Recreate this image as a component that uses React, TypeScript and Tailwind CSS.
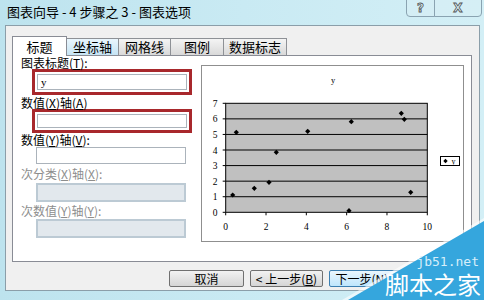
import React from 'react'

const cjk = "font-['Noto_Sans_CJK_SC','Noto_Sans',sans-serif]"

const points: [number, number][] = [
    [31.7, 130], [35.3, 67.3], [53.3, 123.3], [68, 117.3], [75.3, 87.3], [106.7, 66.3],
    [148, 145.7], [150.3, 56.7], [200.3, 48.3], [203.3, 54.3], [209.7, 127.3],
]

const Diamond = ({ x, y, r = 2.6 }: { x: number; y: number; r?: number }) => (
    <polygon points={`${x},${y - r} ${x + r},${y} ${x},${y + r} ${x - r},${y}`} fill="#000" />
)

const ChartPreview = () => {
    const left = 24.7
    const right = 226.3
    const top = 38.3
    const bottom = 147.3
    const step = (bottom - top) / 7
    return (
        <svg viewBox="0 0 261 175" className="block h-full w-full">
            <g transform="translate(-1,-1)" fontFamily="'Liberation Serif', serif" fontSize="9.5" fill="#000">
                <text x="132" y="17.5" textAnchor="middle" fontSize="8.5">y</text>
                <rect x={left} y={top} width={right - left} height={bottom - top} fill="#c0c0c0" stroke="#000" strokeWidth="1" />
                {[1, 2, 3, 4, 5, 6].map((v) => (
                    <line key={v} x1={left} x2={right} y1={bottom - v * step} y2={bottom - v * step} stroke="#000" strokeWidth="1" />
                ))}
                {[0, 1, 2, 3, 4, 5, 6, 7].map((v) => (
                    <g key={v}>
                        <line x1={left - 3} x2={left} y1={bottom - v * step} y2={bottom - v * step} stroke="#000" />
                        <text x="14" y={bottom - v * step + 3.5} textAnchor="middle">{v}</text>
                    </g>
                ))}
                {[0, 2, 4, 6, 8, 10].map((v) => {
                    const x = left + (v / 10) * (right - left)
                    return (
                        <g key={v}>
                            <line x1={x} x2={x} y1={bottom} y2={bottom + 3} stroke="#000" />
                            <text x={x} y="165" textAnchor="middle">{v}</text>
                        </g>
                    )
                })}
                {points.map(([x, y], i) => (
                    <Diamond key={i} x={x} y={y} />
                ))}
                <rect x="239.5" y="91.5" width="19" height="9" fill="#fff" stroke="#000" strokeWidth="1" />
                <Diamond x={244.5} y={96} r={2.2} />
                <text x="252.5" y="99" fontSize="8" textAnchor="middle">y</text>
            </g>
        </svg>
    )
}

const Label = ({ children, disabled, className }: { children: React.ReactNode; disabled?: boolean; className?: string }) => (
    <div className={`text-[12px] leading-[12px] whitespace-nowrap ${disabled ? 'text-[#8d8d8d]' : 'text-black'} ${className ?? ''}`}>
        {children}
    </div>
)

const tabs = [
    { name: '坐标轴', w: 'w-[53px]', hover: true },
    { name: '网格线', w: 'w-[53px]' },
    { name: '图例', w: 'w-[54px]' },
    { name: '数据标志', w: 'w-[64px]' },
]

const App = () => {
    return (
        <div className={`relative h-[300px] w-[484px] overflow-hidden bg-gradient-to-r from-[#bde3ee] via-[#c9eaf3] to-[#d3eff6] ${cjk}`}>
            {/* title bar */}
            <div className="flex h-[25px] items-start">
                <div className="pl-[7px] pt-[3px] text-[13px] leading-[18px] text-black">图表向导 - 4 步骤之 3 - 图表选项</div>
                <div className="ml-auto mr-[2px] -mt-px flex h-[18px]">
                    <div className="flex w-[29px] items-center justify-center rounded-bl-[4px] border border-[#8aa3b1] bg-[#d7eef5]/60 font-['DejaVu_Sans',sans-serif] text-[12px] font-bold text-transparent [-webkit-text-stroke:0.8px_#555]">
                        ?
                    </div>
                    <div className="-ml-px flex w-[48px] items-center justify-center rounded-br-[4px] border border-[#8aa3b1] bg-[#d7eef5]/60 font-['DejaVu_Sans',sans-serif] text-[12px] font-bold text-transparent [-webkit-text-stroke:0.8px_#555]">
                        X
                    </div>
                </div>
            </div>

            {/* dialog body */}
            <div className="ml-[5px] h-[266px] w-[475px] border border-[#8b9ea9] bg-[#f0f0f0] pl-[6px] pt-[10px]">
                {/* tabs */}
                <div className="flex h-[19px] items-end">
                    <div className="relative z-10 -mb-px flex h-[20px] w-[55px] items-center justify-center border border-b-0 border-[#898c95] bg-white text-[13px] text-black">
                        标题
                    </div>
                    {tabs.map((t) => (
                        <div
                            key={t.name}
                            className={`-ml-px flex h-[17px] ${t.w} items-center justify-center border border-b-0 border-[#8e9196] text-[13px] text-black ${t.hover ? 'bg-gradient-to-b from-[#eaf6fd] to-[#c6e4f4]' : 'bg-gradient-to-b from-[#f4f4f4] to-[#d9d9d9]'}`}
                        >
                            {t.name}
                        </div>
                    ))}
                </div>

                {/* panel */}
                <div className="flex h-[207px] w-[460px] border border-[#898c95] bg-white">
                    <div className="w-[180px] pl-[8px] pt-[1px]">
                        <Label>
                            图表标题(<span className="underline">T</span>):
                        </Label>
                        <div className="ml-[11px] h-[26px] w-[160px] border-[3px] border-[#a8282c] p-[2px]">
                            <div className="flex h-full items-center border border-[#abb3bb] bg-white pl-[3px] font-['Liberation_Serif',serif] text-[11px] leading-none">
                                y
                            </div>
                        </div>
                        <Label className="mt-[2px]">
                            数值(<span className="underline">X</span>)轴(<span className="underline">A</span>)
                        </Label>
                        <div className="ml-[11px] h-[24px] w-[160px] border-[3px] border-[#a8282c] p-[2px]">
                            <div className="h-full border border-[#abb3bb] bg-white" />
                        </div>
                        <Label className="mt-[1px]">
                            数值(<span className="underline">Y</span>)轴(<span className="underline">V</span>):
                        </Label>
                        <div className="ml-[15px] mt-[1px] h-[17px] w-[150px] border border-[#abb3bb] bg-white" />
                        <Label disabled className="mt-[4px]">
                            次分类(<span className="underline">X</span>)轴(<span className="underline">X</span>):
                        </Label>
                        <div className="ml-[15px] mt-[3px] h-[19px] w-[150px] border-2 border-[#bccad4] bg-[#e2e8ed]" />
                        <Label disabled className="mt-[3px]">
                            次数值(<span className="underline">Y</span>)轴(<span className="underline">Y</span>):
                        </Label>
                        <div className="ml-[15px] mt-[2px] h-[19px] w-[150px] border-2 border-[#bccad4] bg-[#e2e8ed]" />
                    </div>
                    <div className="ml-[8px] mt-[9px] h-[177px] w-[263px] border border-[#8f8f8f] bg-white">
                        <ChartPreview />
                    </div>
                </div>

                {/* buttons */}
                <div className="mt-[8px] flex gap-[6px] pl-[157px] text-[12px] text-black">
                    <div className="flex h-[17px] w-[75px] items-center justify-center rounded-[2px] border border-[#707070] bg-gradient-to-b from-[#f2f2f2] to-[#d5d5d5]">
                        取消
                    </div>
                    <div className="flex h-[17px] w-[73px] items-center justify-center rounded-[2px] border border-[#707070] bg-gradient-to-b from-[#f2f2f2] to-[#d5d5d5]">
                        &lt; 上一步(<span className="underline">B</span>)
                    </div>
                    <div className="flex h-[17px] w-[75px] items-center justify-center rounded-[2px] border border-[#3c7fb1] bg-gradient-to-b from-[#eaf6fd] to-[#bee6fd]">
                        下一步(<span className="underline">N</span>) &gt;
                    </div>
                </div>
            </div>

            {/* watermark */}
            <svg className="absolute bottom-0 right-0" width="142" height="82" viewBox="0 0 142 82">
                <polygon points="0,82 142,0 142,82" fill="#ffffff" opacity="0.6" />
                <polygon points="6,82 142,3 142,82" fill="#35a6dd" />
            </svg>
            <div className="absolute right-[5px] top-[254px] font-['DejaVu_Sans_Mono',monospace] text-[13px] leading-[16px] text-[#d6eefa]">
                jb51.net
            </div>
            <div className="absolute right-[3px] top-[270px] text-[24px] leading-[28px] text-white">脚本之家</div>
        </div>
    )
}

export default App
